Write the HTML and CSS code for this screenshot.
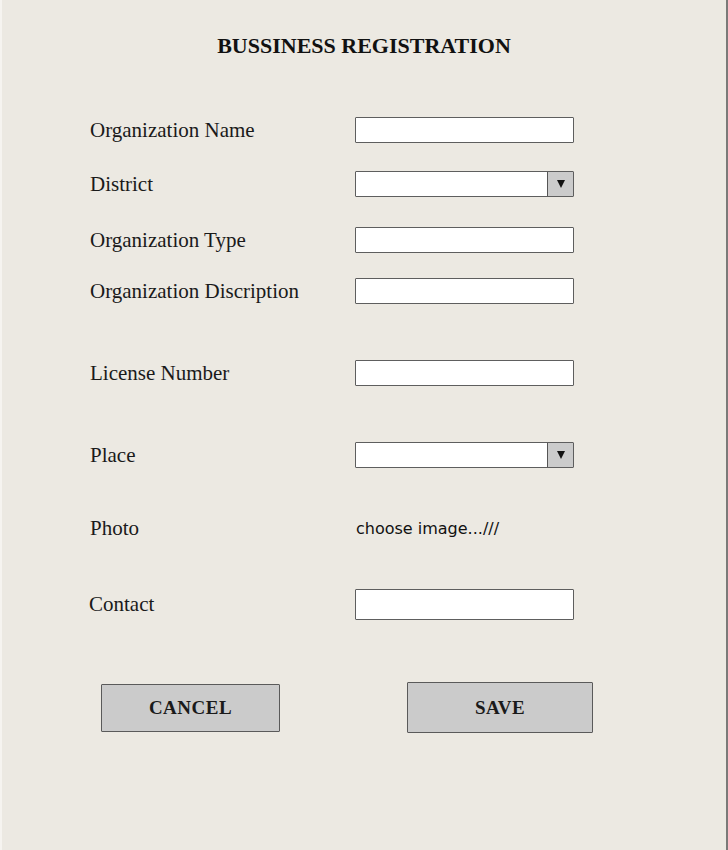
FILE: index.html
```html
<!DOCTYPE html>
<html>
<head>
<meta charset="utf-8">
<link rel="stylesheet" href="styles.css">
</head>
<body>
<div class="page">
  <h1 class="title">BUSSINESS REGISTRATION</h1>
  <form class="form">
    <div class="row r1"><label class="label">Organization Name</label><div class="input"></div></div>
    <div class="row r2"><label class="label">District</label><div class="input select"><span class="sel-btn"><span class="tri"></span></span></div></div>
    <div class="row r3"><label class="label">Organization Type</label><div class="input"></div></div>
    <div class="row r4"><label class="label">Organization Discription</label><div class="input"></div></div>
    <div class="row r5"><label class="label">License Number</label><div class="input"></div></div>
    <div class="row r6"><label class="label">Place</label><div class="input select"><span class="sel-btn"><span class="tri"></span></span></div></div>
    <div class="row r7"><label class="label">Photo</label><span class="file">choose image.../// </span></div>
    <div class="row r8"><label class="label contact">Contact</label><div class="input tall"></div></div>
  </form>
  <div class="buttons">
    <button class="btn cancel" type="button">CANCEL</button>
    <button class="btn save" type="button">SAVE</button>
  </div>
</div>
</body>
</html>
```
FILE: styles.css
```css
html, body {
  margin: 0;
  padding: 0;
  background: #ece9e2;
}
.page {
  box-sizing: border-box;
  width: 728px;
  height: 850px;
  border-left: 2px solid #f6f4f0;
  border-right: 2px solid #7a7a78;
  background: #ece9e2;
  font-family: "Liberation Serif", "Times New Roman", serif;
  color: #111;
}
.title {
  margin: 0;
  padding-top: 31px;
  height: 30px;
  line-height: 30px;
  text-align: center;
  font-size: 22px;
  font-weight: bold;
  letter-spacing: 0;
}
.form {
  display: flex;
  flex-direction: column;
  padding-left: 88px;
  margin-top: 54px;
}
.row {
  display: flex;
  align-items: center;
  height: 30px;
}
.r2 { margin-top: 24px; }
.r3 { margin-top: 26px; }
.r4 { margin-top: 21px; }
.r5 { margin-top: 52px; }
.r6 { margin-top: 52px; }
.r7 { margin-top: 43px; }
.r8 { margin-top: 46px; }
.label {
  width: 265px;
  font-size: 21px;
  line-height: 24px;
  color: #1a1a1a;
}
.label.contact { margin-left: -1px; width: 266px; }
.input {
  box-sizing: border-box;
  width: 219px;
  height: 26px;
  background: #fff;
  border: 1.5px solid #5e5e5e;
  border-radius: 1px;
  display: flex;
  justify-content: flex-end;
}
.input.tall { height: 31px; }
.sel-btn {
  width: 25px;
  height: 100%;
  background: #cbcbcb;
  border-left: 1.5px solid #555;
  display: flex;
  align-items: center;
  justify-content: center;
}
.tri {
  width: 0;
  height: 0;
  border-left: 4.5px solid transparent;
  border-right: 4.5px solid transparent;
  border-top: 8px solid #111;
}
.file {
  font-family: "Comic Sans MS", "DejaVu Sans", sans-serif;
  font-size: 16px;
  letter-spacing: 0;
  margin-left: 1px;
  color: #111;
}
.buttons {
  display: flex;
  align-items: center;
  margin-top: 63px;
  padding-left: 99px;
}
.btn {
  box-sizing: border-box;
  background: #cbcbcb;
  border: 1.5px solid #5a5a5a;
  border-radius: 1px;
  font-family: "Liberation Serif", "Times New Roman", serif;
  font-weight: bold;
  font-size: 19px;
  color: #1a1a1a;
  padding: 0;
  letter-spacing: 0.5px;
}
.cancel {
  width: 179px;
  height: 48px;
}
.save {
  width: 186px;
  height: 51px;
  margin-left: 127px;
}
```
